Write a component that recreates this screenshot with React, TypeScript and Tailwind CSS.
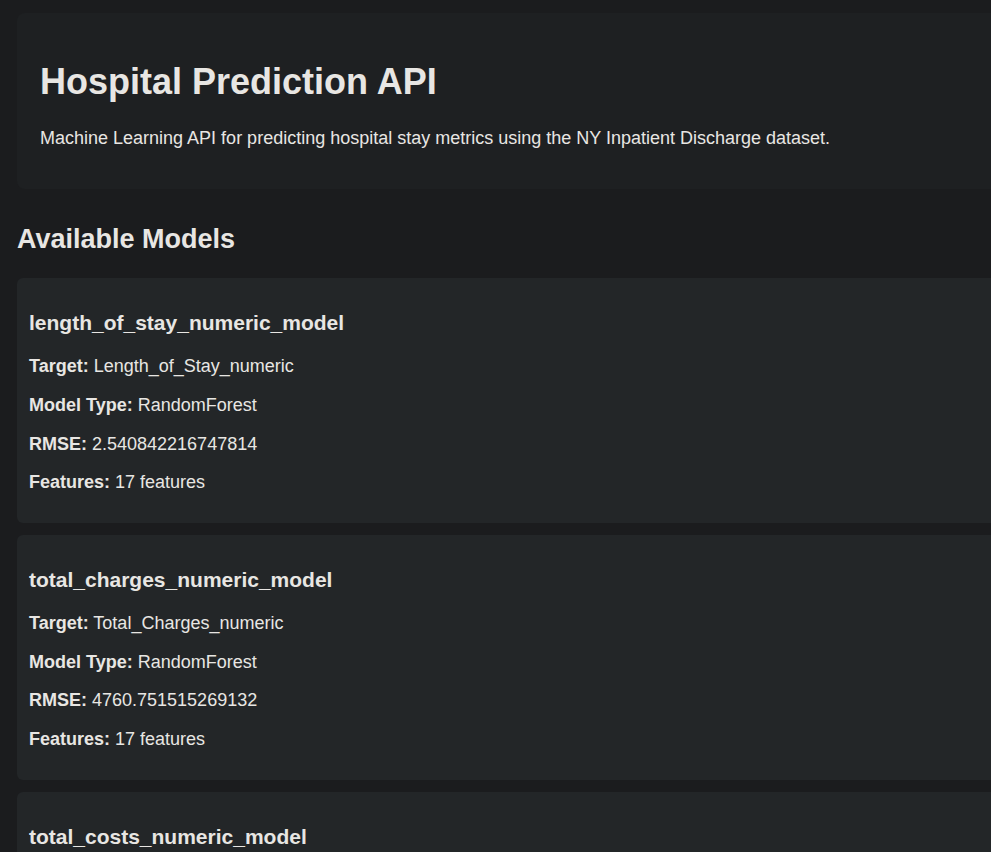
import React from 'react';

const models = [
  {
    name: 'length_of_stay_numeric_model',
    target: 'Length_of_Stay_numeric',
    type: 'RandomForest',
    rmse: '2.540842216747814',
    features: 17,
  },
  {
    name: 'total_charges_numeric_model',
    target: 'Total_Charges_numeric',
    type: 'RandomForest',
    rmse: '4760.751515269132',
    features: 17,
  },
  {
    name: 'total_costs_numeric_model',
    target: 'Total_Costs_numeric',
    type: 'RandomForest',
    rmse: '1811.259478270522',
    features: 17,
  },
];

const App: React.FC = () => {
  return (
    <div className="w-full min-h-[852px] overflow-x-hidden bg-[#1b1c1e] text-[#e8e6e3] font-['Liberation_Sans',Arial,sans-serif] text-[18px]">
      <div className="w-[1300px] pl-[17px] pt-[13px] pb-6">
        {/* Header */}
        <div className="bg-[#1e2022] rounded-lg px-[23px] py-[24px] mb-[35px]">
          <h1 className="text-[36px] leading-[1.149] font-bold mt-[24px] mb-[26px]">Hospital Prediction API</h1>
          <p className="leading-[1.149] mb-[16px]">
            Machine Learning API for predicting hospital stay metrics using the NY Inpatient Discharge dataset.
          </p>
        </div>

        {/* Models */}
        <h2 className="text-[27px] leading-[1.149] font-bold mb-[23px]">Available Models</h2>
        <div className="flex flex-col gap-3">
          {models.map(m => (
            <div key={m.name} className="bg-[#232628] rounded-md p-3">
              <h3 className="text-[21px] leading-[1.149] font-bold mt-[21px] mb-[21px]">{m.name}</h3>
              <p className="leading-[1.149]"><strong>Target:</strong> {m.target}</p>
              <p className="leading-[1.149] mt-[18px]"><strong>Model Type:</strong> {m.type}</p>
              <p className="leading-[1.149] mt-[18px]"><strong>RMSE:</strong> {m.rmse}</p>
              <p className="leading-[1.149] mt-[18px] mb-[18px]"><strong>Features:</strong> {m.features} features</p>
            </div>
          ))}
        </div>
      </div>
    </div>
  );
};

export default App;
